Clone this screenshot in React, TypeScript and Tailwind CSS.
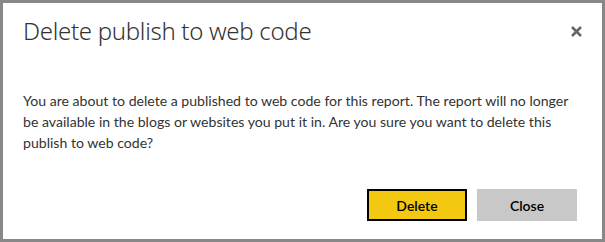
export default function App() {
  return (
    <div className="w-[605px] h-[242px] bg-white border-[3px] border-[#888888] flex flex-col font-['Noto_Sans','Open_Sans',sans-serif] text-[#333333]">
      <div className="flex items-start justify-between pl-[20px] pr-[20px] pt-[12px]">
        <h1 className="text-[24px] leading-[32px] font-light tracking-[-0.3px]">Delete publish to web code</h1>
        <button className="mt-[10px] w-[12px] h-[12px] flex items-center justify-center" aria-label="Close">
          <svg width="11" height="11" viewBox="0 0 11 11">
            <path d="M1 1 L10 10 M10 1 L1 10" stroke="#666666" strokeWidth="2.6" />
          </svg>
        </button>
      </div>
      <div className="pl-[20px] pr-[20px] mt-[43px] text-[14.1px] leading-[21px] font-['Lato','Noto_Sans',sans-serif] whitespace-nowrap">
        <p>You are about to delete a published to web code for this report. The report will no longer</p>
        <p>be available in the blogs or websites you put it in. Are you sure you want to delete this</p>
        <p>publish to web code?</p>
      </div>
      <div className="mt-auto mb-[18px] mr-[25px] flex justify-end gap-[10px] font-['Lato','Noto_Sans',sans-serif]">
        <button className="w-[100px] h-[32px] bg-[#F2C811] border-2 border-black text-[14px] text-black font-semibold">
          Delete
        </button>
        <button className="w-[100px] h-[32px] bg-[#C8C8C8] text-[14px] text-black font-semibold">Close</button>
      </div>
    </div>
  )
}
